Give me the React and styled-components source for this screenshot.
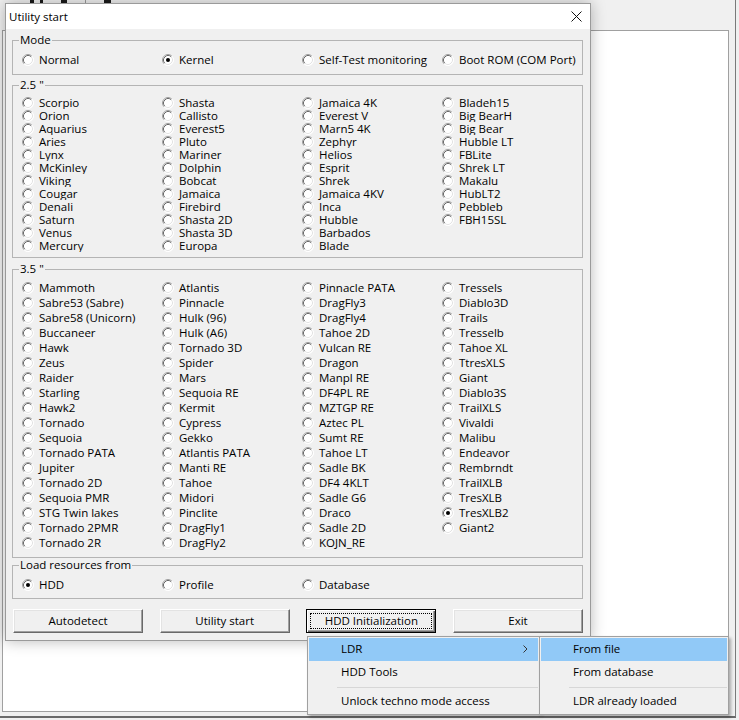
import React from 'react';
import styled, {createGlobalStyle} from "styled-components";

const GlobalStyle = createGlobalStyle`
  html, body {
    margin: 0;
    padding: 0;
    background: #f0f0f0;
    overflow: hidden;
  }
  body {
    font-family: "Open Sans", "Liberation Sans", sans-serif;
    font-size: 11.5px;
    color: #000;
  }
`;

const Desktop = styled.div`
  position: relative;
  width: 739px;
  height: 720px;
  overflow: hidden;
  background: #f0f0f0;
`;

// window behind the dialog
const AppFrame = styled.div`
  width: 735px;
  height: 716px;
  border-right: 1px solid #7a7a7a;
  border-bottom: 2px solid #6a6a6a;
  display: flex;
  flex-direction: column;
`;

const Toolbar = styled.div`
  height: 30px;
  display: flex;
  align-items: flex-start;
  gap: 6px;
  padding-left: 30px;
  overflow: hidden;
`;

const ToolGlyph = styled.div`
  width: ${({w}) => w}px;
  height: 3px;
  margin-left: ${({gap}) => gap || 0}px;
  background: ${({light}) => light ? "#9a9a9a" : "#1a1a1a"};
`;

const Panel = styled.div`
  flex: 1;
  margin: 0 6px 4px 2px;
  background: #fff;
  border: 1px solid #a0a0a0;
`;

const Dialog = styled.div`
  position: absolute;
  left: 5px;
  top: 3px;
  width: 584px;
  height: 636px;
  border: 1px solid #9a9a9a;
  background: #f0f0f0;
  box-shadow: 0 0 14px rgba(0, 0, 0, 0.28);
  display: flex;
  flex-direction: column;
`;

const TitleBar = styled.div`
  height: 25px;
  background: #fff;
  display: flex;
  align-items: center;
  justify-content: space-between;
  padding: 0 8px 1px 3px;
  box-sizing: border-box;
`;

const CloseGlyph = () => (
    <svg width="11" height="11" viewBox="0 0 11 11">
        <path d="M0.5 0.5 L10.5 10.5 M10.5 0.5 L0.5 10.5" stroke="#111" strokeWidth="1" fill="none"/>
    </svg>
);

const Body = styled.div`
  flex: 1;
  display: flex;
  flex-direction: column;
  padding: 4px 7px 0 6px;
`;

const Group = styled.fieldset`
  margin: ${({mt}) => mt || 0}px 0 0 0;
  padding: ${({pt}) => pt}px 0 ${({pb}) => pb}px 8px;
  border: 1px solid #b4b4b4;
  min-width: 0;
`;

const Legend = styled.legend`
  margin-left: -2px;
  padding: 0 1px;
  line-height: 14px;
`;

const Grid = styled.div`
  display: grid;
  grid-template-columns: repeat(4, 140px);
  grid-template-rows: repeat(${({rows}) => rows}, ${({rowH}) => rowH}px);
  grid-auto-flow: column;
`;

const RadioLabel = styled.label`
  display: flex;
  align-items: center;
  gap: 5px;
  height: ${({rowH}) => rowH}px;
  line-height: ${({rowH}) => rowH}px;
  white-space: nowrap;
  overflow: hidden;
  padding-left: 1px;
`;

const RadioMark = ({checked}) => (
    <svg width="12" height="12" viewBox="0 0 12 12" style={{flex: "none"}}>
        <circle cx="6" cy="6" r="5.5" fill="#fff"/>
        <path d="M2.11 9.89 A5.5 5.5 0 0 1 9.89 2.11" stroke="#a0a0a0" fill="none"/>
        <path d="M2.82 9.18 A4.5 4.5 0 0 1 9.18 2.82" stroke="#696969" fill="none"/>
        <path d="M9.89 2.11 A5.5 5.5 0 0 1 2.11 9.89" stroke="#ffffff" fill="none"/>
        <path d="M9.18 2.82 A4.5 4.5 0 0 1 2.82 9.18" stroke="#e3e3e3" fill="none"/>
        {checked && <circle cx="6" cy="6" r="2" fill="#000"/>}
    </svg>
);

const Radio = ({label, checked, rowH}) => (
    <RadioLabel rowH={rowH}>
        <RadioMark checked={checked}/>
        <span>{label}</span>
    </RadioLabel>
);

const ButtonRow = styled.div`
  display: flex;
  justify-content: space-between;
  margin-top: 10px;
  padding: 0 0 0 1px;
`;

const Button = styled.div`
  position: relative;
  width: 130px;
  height: 24px;
  box-sizing: border-box;
  display: flex;
  align-items: center;
  justify-content: center;
  padding-bottom: 1px;
  background: #f0f0f0;
  border-top: 1px solid ${({focused}) => focused ? "#000" : "#fff"};
  border-left: 1px solid ${({focused}) => focused ? "#000" : "#fff"};
  border-right: 1px solid ${({focused}) => focused ? "#000" : "#696969"};
  border-bottom: 1px solid ${({focused}) => focused ? "#000" : "#696969"};
  box-shadow: ${({focused}) => focused
    ? "inset 1px 1px 0 #fff, inset -1px -1px 0 #696969, inset -2px -2px 0 #a0a0a0"
    : "inset -1px -1px 0 #a0a0a0, inset 1px 1px 0 #e3e3e3"};
`;

const FocusRing = styled.span`
  position: absolute;
  inset: 3px;
  border: 1px dotted #000;
`;

const Menu = styled.div`
  position: absolute;
  left: ${({x}) => x}px;
  top: 636px;
  width: ${({w}) => w}px;
  box-sizing: border-box;
  padding: 1px;
  background: #f0f0f0;
  border: 1px solid #a0a0a0;
  box-shadow: 2px 2px 3px rgba(0, 0, 0, 0.3);
`;

const MenuItem = styled.div`
  height: 23px;
  box-sizing: border-box;
  display: flex;
  align-items: center;
  justify-content: space-between;
  padding: 0 10px 2px 32px;
  background: ${({active}) => active ? "#91c9f7" : "transparent"};
`;

const MenuSeparator = styled.div`
  height: 6px;
  display: flex;
  align-items: center;
  padding-left: 28px;

  &::after {
    content: "";
    flex: 1;
    height: 1px;
    background: #d7d7d7;
  }
`;

const Chevron = () => (
    <svg width="5" height="8" viewBox="0 0 5 8">
        <path d="M0.5 0.5 L4 4 L0.5 7.5" stroke="#333" fill="none"/>
    </svg>
);

const modes = ["Normal", "Kernel", "Self-Test monitoring", "Boot ROM (COM Port)"];

const drives25 = [
    "Scorpio", "Orion", "Aquarius", "Aries", "Lynx", "McKinley", "Viking", "Cougar", "Denali", "Saturn", "Venus", "Mercury",
    "Shasta", "Callisto", "Everest5", "Pluto", "Mariner", "Dolphin", "Bobcat", "Jamaica", "Firebird", "Shasta 2D", "Shasta 3D", "Europa",
    "Jamaica 4K", "Everest V", "Marn5 4K", "Zephyr", "Helios", "Esprit", "Shrek", "Jamaica 4KV", "Inca", "Hubble", "Barbados", "Blade",
    "Bladeh15", "Big BearH", "Big Bear", "Hubble LT", "FBLite", "Shrek LT", "Makalu", "HubLT2", "Pebbleb", "FBH15SL",
];

const drives35 = [
    "Mammoth", "Sabre53 (Sabre)", "Sabre58 (Unicorn)", "Buccaneer", "Hawk", "Zeus", "Raider", "Starling", "Hawk2", "Tornado",
    "Sequoia", "Tornado PATA", "Jupiter", "Tornado 2D", "Sequoia PMR", "STG Twin lakes", "Tornado 2PMR", "Tornado 2R",
    "Atlantis", "Pinnacle", "Hulk (96)", "Hulk (A6)", "Tornado 3D", "Spider", "Mars", "Sequoia RE", "Kermit", "Cypress",
    "Gekko", "Atlantis PATA", "Manti RE", "Tahoe", "Midori", "Pinclite", "DragFly1", "DragFly2",
    "Pinnacle PATA", "DragFly3", "DragFly4", "Tahoe 2D", "Vulcan RE", "Dragon", "Manpl RE", "DF4PL RE", "MZTGP RE",
    "Aztec PL", "Sumt RE", "Tahoe LT", "Sadle BK", "DF4 4KLT", "Sadle G6", "Draco", "Sadle 2D", "KOJN_RE",
    "Tressels", "Diablo3D", "Trails", "Tresselb", "Tahoe XL", "TtresXLS", "Giant", "Diablo3S", "TrailXLS", "Vivaldi",
    "Malibu", "Endeavor", "Rembrndt", "TrailXLB", "TresXLB", "TresXLB2", "Giant2",
];

const sources = ["HDD", "Profile", "Database"];

const App = () => {
    return (
        <Desktop>
            <GlobalStyle/>
            <AppFrame>
                <Toolbar>
                    <ToolGlyph w={4}/>
                    <ToolGlyph w={3}/>
                    <ToolGlyph w={6} gap={12}/>
                    <ToolGlyph w={1} gap={12} light/>
                    <ToolGlyph w={7} gap={12}/>
                </Toolbar>
                <Panel/>
            </AppFrame>

            <Dialog>
                <TitleBar>
                    <span>Utility start</span>
                    <CloseGlyph/>
                </TitleBar>
                <Body>
                    <Group pt={6} pb={7}>
                        <Legend>Mode</Legend>
                        <Grid rows={1} rowH={14}>
                            {modes.map(m => <Radio key={m} label={m} rowH={14} checked={m === "Kernel"}/>)}
                        </Grid>
                    </Group>
                    <Group mt={3} pt={4} pb={5}>
                        <Legend>2.5 "</Legend>
                        <Grid rows={12} rowH={13}>
                            {drives25.map(d => <Radio key={d} label={d} rowH={13}/>)}
                        </Grid>
                    </Group>
                    <Group mt={4} pt={4} pb={7}>
                        <Legend>3.5 "</Legend>
                        <Grid rows={18} rowH={15}>
                            {drives35.map(d => <Radio key={d} label={d} rowH={15} checked={d === "TresXLB2"}/>)}
                        </Grid>
                    </Group>
                    <Group pt={6} pb={6}>
                        <Legend>Load resources from</Legend>
                        <Grid rows={1} rowH={14}>
                            {sources.map(s => <Radio key={s} label={s} rowH={14} checked={s === "HDD"}/>)}
                        </Grid>
                    </Group>
                    <ButtonRow>
                        <Button>Autodetect</Button>
                        <Button>Utility start</Button>
                        <Button focused>HDD Initialization<FocusRing/></Button>
                        <Button>Exit</Button>
                    </ButtonRow>
                </Body>
            </Dialog>

            <Menu x={307} w={233}>
                <MenuItem active>LDR<Chevron/></MenuItem>
                <MenuItem>HDD Tools</MenuItem>
                <MenuSeparator/>
                <MenuItem>Unlock techno mode access</MenuItem>
            </Menu>
            <Menu x={539} w={190}>
                <MenuItem active>From file</MenuItem>
                <MenuItem>From database</MenuItem>
                <MenuSeparator/>
                <MenuItem>LDR already loaded</MenuItem>
            </Menu>
        </Desktop>
    );
};

export default App;
